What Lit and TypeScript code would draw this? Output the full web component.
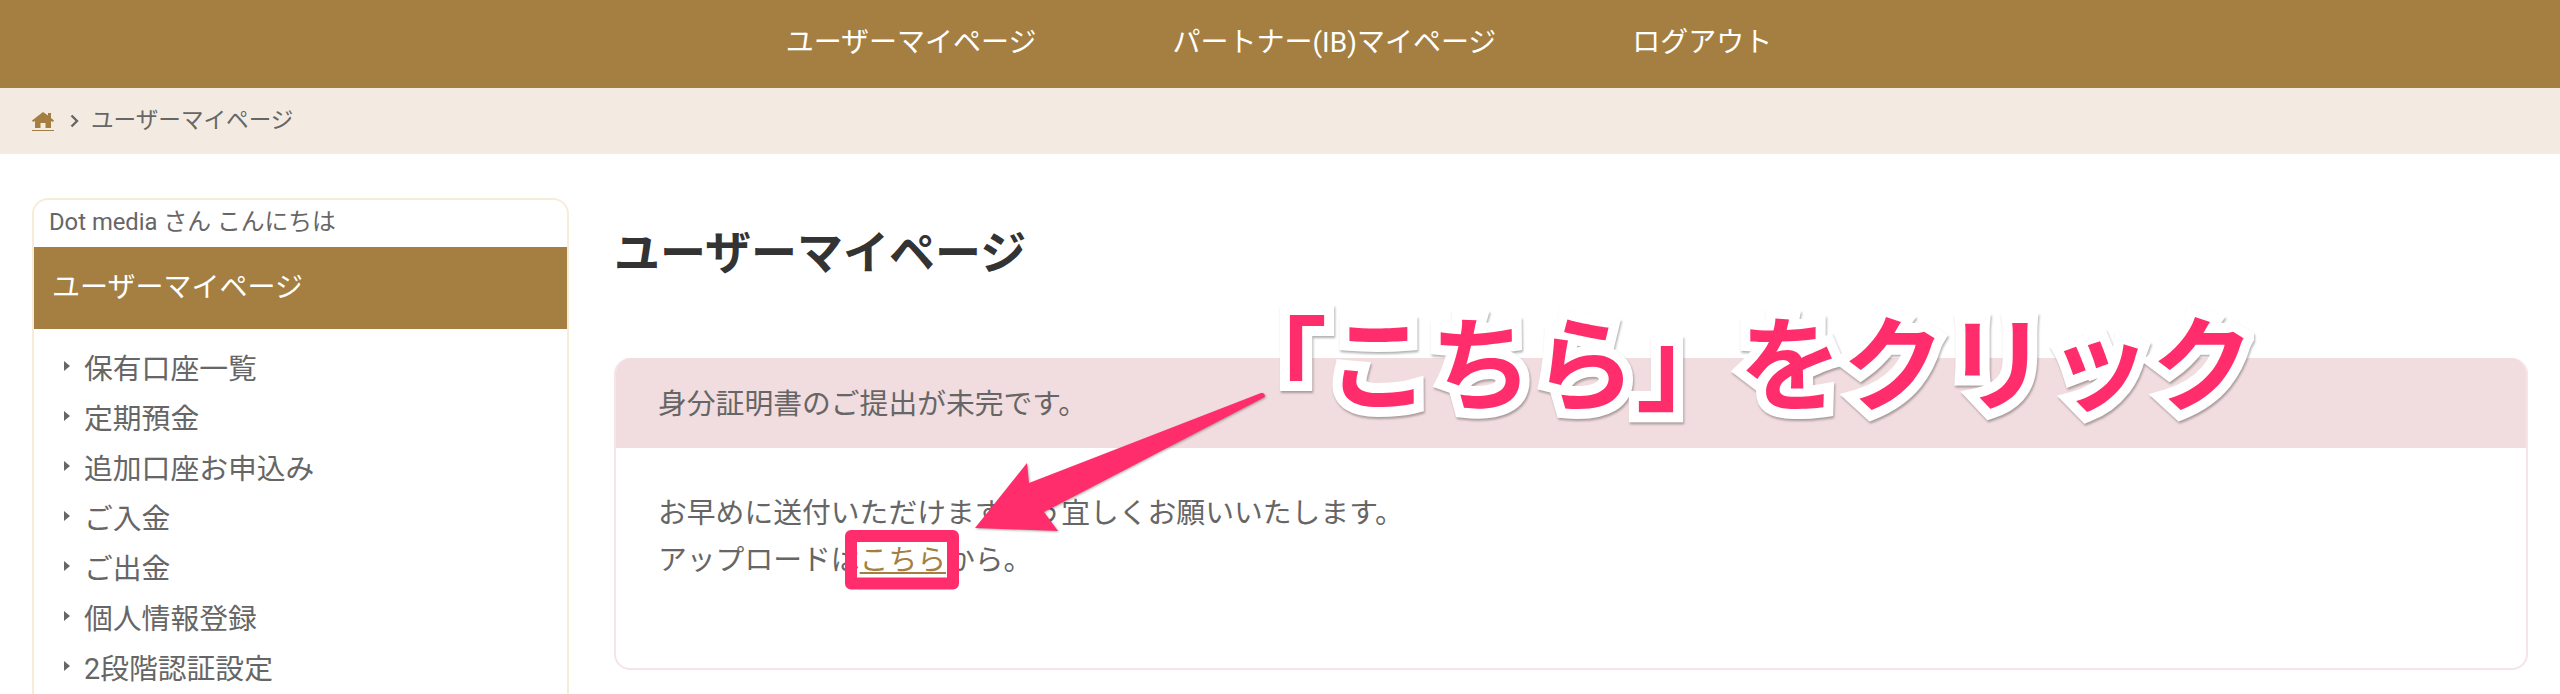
import { LitElement, html, css, svg } from "lit";
import { customElement } from "lit/decorators.js";

const MENU = ["保有口座一覧", "定期預金", "追加口座お申込み", "ご入金", "ご出金", "個人情報登録", "2段階認証設定"];

@customElement("app-root")
export class AppRoot extends LitElement {
  static styles = css`
    :host {
      display: block;
      position: relative;
      width: 2560px;
      height: 694px;
      overflow: hidden;
      background: #fff;
      color: #666;
      font-family: Roboto, "Noto Sans CJK JP", sans-serif;
      font-size: 28.8px;
    }
    a { color: inherit; text-decoration: none; }
    .nav {
      height: 88px;
      background: #a47f41;
      display: flex;
      justify-content: center;
      align-items: center;
      gap: 136px;
      color: #fff;
      padding: 0 2px 8px 0;
      box-sizing: border-box;
      font-size: 28px;
    }
    .crumb {
      height: 66px;
      background: #f3ebe2;
      display: flex;
      align-items: center;
      padding-left: 32px;
      font-size: 22.6px;
      color: #666;
    }
    .crumb-t { margin-bottom: 6px; }
    .home { display: block; border-bottom: 1px solid #a47f41; line-height: 0; padding-bottom: 2px; }
    .chev { margin: 0 12px 0 16px; display: block; }
    .page {
      display: flex;
      padding: 44px 32px 0 32px;
      gap: 45px;
      align-items: flex-start;
    }
    .side {
      width: 537px;
      flex: none;
      box-sizing: border-box;
      border: 2px solid #f8ecd9;
      border-bottom: 0;
      border-radius: 16px 16px 0 0;
      height: 600px;
    }
    .hi { height: 47px; line-height: 44px; font-size: 23.8px; padding-left: 15px; }
    .side-h {
      height: 82px;
      background: #a47f41;
      color: #fff;
      line-height: 82px;
      padding-left: 18px;
      font-size: 28px;
    }
    .menu { list-style: none; margin: 0; padding: 12px 0 0 30px; }
    .menu li { height: 50px; display: flex; align-items: center; gap: 14px; }
    .tri { width: 0; height: 0; border-left: 6px solid #666; border-top: 5px solid transparent; border-bottom: 5px solid transparent; }
    .main { flex: 1; min-width: 0; }
    h1 { margin: 0; font-size: 46px; line-height: 64px; font-weight: 700; color: #333; padding-top: 23px; height: 93px; }
    .alert {
      margin-top: 44px;
      height: 312px;
      box-sizing: border-box;
      border: 2px solid #f6e4e6;
      border-top: 0;
      border-radius: 16px;
      overflow: hidden;
    }
    .alert-h {
      height: 90px;
      margin: 0 -2px;
      background: #f1dddf;
      padding-left: 44px;
      line-height: 92px;
    }
    .alert-b { padding: 42px 0 0 42px; line-height: 47px; }
    .link { color: #a47f41; text-decoration: underline; }
    .overlay { position: absolute; left: 0; top: 0; pointer-events: none; }
    .callout {
      position: absolute;
      left: 1224px;
      top: 284px;
      font-family: "Noto Sans CJK JP", sans-serif;
      font-weight: 700;
      font-size: 103px;
      line-height: 150px;
      white-space: nowrap;
      color: #ff2d6b;
      -webkit-text-stroke: 20px #fff;
      paint-order: stroke fill;
      filter: drop-shadow(1px 2px 1px rgba(0,0,0,.3));
    }
  `;

  render() {
    return html`
      <nav class="nav">
        <a>ユーザーマイページ</a>
        <a>パートナー(IB)マイページ</a>
        <a>ログアウト</a>
      </nav>
      <div class="crumb">
        <a class="home">
          <svg width="22" height="16" viewBox="0 0 22 16"><path fill="#a47f41" d="M11 0 16 3.600V1h3v5l3 2.500-1 1.500-2-1v7h-5.500v-5h-5v5H3V9l-2 1-1-1.500Z"/></svg>
        </a>
        <svg class="chev" width="9" height="14" viewBox="0 0 9 14"><path fill="none" stroke="#666" stroke-width="2.400" d="M1.500 1.500 7 7 1.500 12.500"/></svg>
        <span class="crumb-t">ユーザーマイページ</span>
      </div>
      <div class="page">
        <aside class="side">
          <div class="hi">Dot media さん こんにちは</div>
          <div class="side-h">ユーザーマイページ</div>
          <ul class="menu">
            ${MENU.map((m) => html`<li><span class="tri"></span><span>${m}</span></li>`)}
          </ul>
        </aside>
        <main class="main">
          <h1>ユーザーマイページ</h1>
          <section class="alert">
            <div class="alert-h">身分証明書のご提出が未完です。</div>
            <div class="alert-b">
              お早めに送付いただけますよう宜しくお願いいたします。<br />
              アップロードは<a class="link">こちら</a>から。
            </div>
          </section>
        </main>
      </div>
      <svg class="overlay" width="2560" height="694" viewBox="0 0 2560 694">
        ${svg`<rect x="851" y="536" width="102" height="47.500" fill="none" stroke="#ff2d6b" stroke-width="12" stroke-linejoin="round"/>
        <path d="M1263 393 Q1267 396 1263 398 L1044 512 L1058 531 L975 528 L1027 463 L1029 483 L1261 393 Z" fill="#ff2d6b" style="filter:drop-shadow(1px 1px 1px rgba(0,0,0,.3))"/>`}
      </svg>
      <div class="callout">「こちら」をクリック</div>
    `;
  }
}
